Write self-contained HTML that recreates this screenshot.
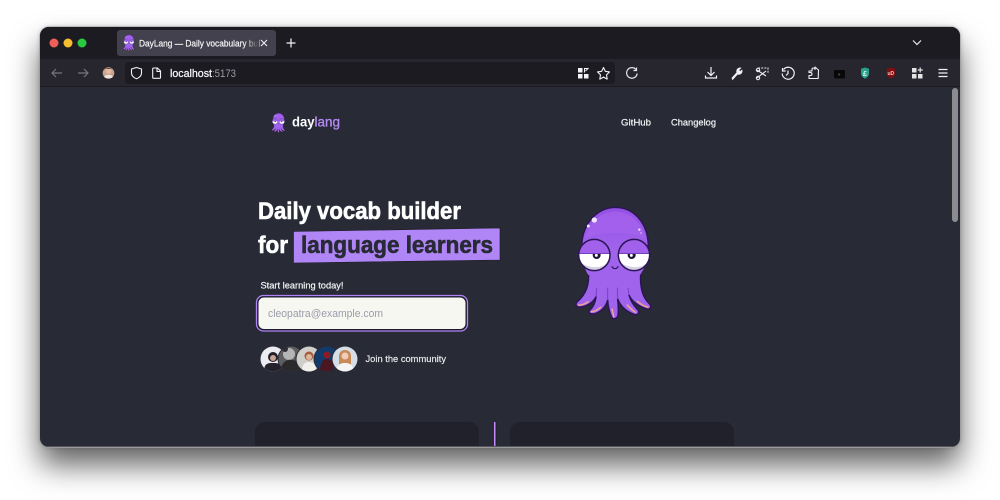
<!DOCTYPE html>
<html><head><meta charset="utf-8"><style>
html,body{margin:0;padding:0;background:#fff;width:1000px;height:500px;overflow:hidden}
#w{position:absolute;left:40px;top:27px;width:920px;height:420px;border-radius:9px;box-shadow:0 18px 30px rgba(0,0,0,.62),0 0 5px rgba(0,0,0,.25);}
svg{position:absolute;left:0;top:0}
text{font-family:"Liberation Sans",sans-serif}
</style></head><body><div id="w"></div>
<svg width="1000" height="500" viewBox="0 0 1000 500" xmlns="http://www.w3.org/2000/svg">
<defs>
<clipPath id="win"><rect x="40" y="27" width="920" height="420" rx="9"/></clipPath>
<linearGradient id="fade" x1="0" x2="1"><stop offset="0" stop-color="#42414d" stop-opacity="0"/><stop offset="1" stop-color="#42414d"/></linearGradient>
<linearGradient id="head" x1="0" x2="0" y1="0" y2="1"><stop offset="0" stop-color="#9350e4"/><stop offset=".6" stop-color="#a063ec"/><stop offset="1" stop-color="#a063ec"/></linearGradient>
<symbol id="octo" viewBox="0 0 330 405">
<path d="M85 225C88 265 82 295 50 322C44 332 52 338 62 336C85 332 100 322 108 305C106 325 98 338 88 347C84 357 96 359 108 355C125 348 138 335 143 315C144 335 148 352 155 366C160 374 172 372 174 360C176 345 175 330 173 312C180 330 195 348 222 358C232 362 240 354 234 345C222 332 212 320 207 300C215 318 235 335 262 342C272 344 276 334 268 326C248 308 238 275 243 225Z" fill="#a063ec" stroke="#2c1556" stroke-width="4.500" stroke-linejoin="round"/>
<path d="M110 280L108 305M143 278L143 315M172 278L173 312M204 278L207 300" fill="none" stroke="#7a3fc4" stroke-width="3"/>
<path d="M56 330C66 331 76 326 84 320M94 350C104 350 114 344 122 337M161 366C160 358 158 350 156 342M226 352C218 346 208 338 202 330M264 337C254 334 240 326 232 319" fill="none" stroke="#f0a58c" stroke-width="4.500" stroke-linecap="round"/>
<path d="M66 175C58 90 110 37 165 37C225 37 272 90 264 175C262 205 250 225 240 240H85C75 225 68 205 66 175Z" fill="url(#head)"/>
<path d="M66 175C58 90 110 37 165 37C225 37 272 90 264 175" fill="none" stroke="#2c1556" stroke-width="4.500"/>
<path d="M78 130C85 80 125 50 165 50C215 50 250 90 254 130C220 110 120 105 78 130Z" fill="#a866ee" opacity=".6"/>
<circle cx="103" cy="75" r="8" fill="#f0e4ff"/><circle cx="85" cy="93" r="4.500" fill="#f0e4ff"/><circle cx="238" cy="104" r="3.500" fill="#f0e4ff"/><circle cx="243" cy="114" r="3" fill="#c9a2f5"/>
<circle cx="103" cy="180" r="47" fill="#fff"/>
<circle cx="222" cy="180" r="47" fill="#fff"/>
<path d="M66 205C85 218 120 222 142 205C128 234 82 234 66 205Z" fill="#d6cfe6"/>
<path d="M186 205C205 218 240 222 260 205C248 234 200 234 186 205Z" fill="#d6cfe6"/>
<circle cx="110" cy="180" r="12" fill="#1f1535"/><circle cx="215" cy="180" r="12" fill="#1f1535"/>
<circle cx="109" cy="181" r="4.500" fill="#fff"/><circle cx="214" cy="181" r="4.500" fill="#fff"/>
<path d="M56 176A47 47 0 0 1 150 176Z" fill="#a161ea"/>
<path d="M175 176A47 47 0 0 1 269 176Z" fill="#a161ea"/>
<path d="M57 176H149M176 176H268" stroke="#5b2ea0" stroke-width="2"/>
<circle cx="103" cy="180" r="47" fill="none" stroke="#2c1556" stroke-width="4.500"/>
<circle cx="222" cy="180" r="47" fill="none" stroke="#2c1556" stroke-width="4.500"/>
<path d="M156 215C160 223 170 223 174 215" fill="none" stroke="#2c1556" stroke-width="3.500" stroke-linecap="round"/>
</symbol>
<clipPath id="a1"><circle cx="273" cy="359" r="12.500"/></clipPath>
<clipPath id="a2"><circle cx="291" cy="359" r="12.500"/></clipPath>
<clipPath id="a3"><circle cx="309" cy="359" r="12.500"/></clipPath>
<clipPath id="a4"><circle cx="327" cy="359" r="12.500"/></clipPath>
<clipPath id="a5"><circle cx="345" cy="359" r="12.500"/></clipPath>
</defs>
<rect x="39.500" y="26.500" width="921" height="421.500" rx="9.500" fill="#9a9a9a"/>
<g clip-path="url(#win)">
<rect x="40" y="27" width="920" height="420" fill="#282a36"/>
<rect x="40" y="27" width="920" height="32" fill="#1c1b22"/>
<rect x="40" y="59" width="920" height="27" fill="#27262e"/>
<rect x="40" y="86" width="920" height="1" fill="#1b1b21"/>
<rect x="117" y="30" width="159" height="26" rx="3" fill="#42414d"/>
<rect x="125" y="62" width="490" height="22" rx="3" fill="#1c1b22"/>
<rect x="255" y="422" width="224" height="40" rx="10" fill="#20212a"/>
<rect x="510" y="422" width="224" height="40" rx="10" fill="#20212a"/>
<rect x="494" y="422" width="1.600" height="30" fill="#c58af9"/>
<rect x="495.600" y="422" width=".8" height="30" fill="#1a1a22"/>
<rect x="40" y="446" width="920" height="1" fill="#55555c"/>
<rect x="952" y="88" width="6" height="134" rx="3" fill="#8c8c90"/>
</g>
<circle cx="54" cy="43" r="4.500" fill="#ed5f57"/><circle cx="68" cy="43" r="4.500" fill="#f5bd2f"/><circle cx="82" cy="43" r="4.500" fill="#28c840"/>
<use href="#octo" x="121" y="33" width="16" height="19.600"/>
<text x="139" y="46.500" font-size="9" stroke="#f4f4f6" stroke-width=".2" fill="#f4f4f6" textLength="121" lengthAdjust="spacingAndGlyphs">DayLang — Daily vocabulary bui</text>
<rect x="244" y="33" width="15" height="20" fill="url(#fade)"/>
<path d="M261 40l6 6M267 40l-6 6" stroke="#f0f0f3" stroke-width="1.100" fill="none"/>
<path d="M291 38.500v9M286.500 43h9" stroke="#f4f4f6" stroke-width="1.200" fill="none"/>
<path d="M913 40.500l4 4 4-4" stroke="#e8e8ea" stroke-width="1.200" fill="none"/>
<path d="M62 73H52M56 69l-4 4 4 4" stroke="#77767f" stroke-width="1.200" fill="none"/>
<path d="M78 73H88M84 69l4 4-4 4" stroke="#77767f" stroke-width="1.200" fill="none"/>
<circle cx="108.500" cy="73" r="5.800" fill="#c9a48e"/><circle cx="108.500" cy="71" r="3" fill="#e3b9a2"/><path d="M103 71a6 5 0 0 1 11 0l-2-2h-7z" fill="#5a4034"/><path d="M104 77a6 4 0 0 0 9 0l-2-2h-5z" fill="#e9e4df"/>
<path d="M136.500 67.500l5 1.500v4c0 3-2.500 4.800-5 5.800c-2.500-1-5-2.800-5-5.800v-4z" fill="none" stroke="#f2f2f4" stroke-width="1.100"/>
<path d="M153 68h4.500l3 3v6.500a.8.800 0 0 1-.8.800h-6.200a.8.800 0 0 1-.8-.8v-9a.8.800 0 0 1 .8-.5zM157 68v3.500h3.500" fill="none" stroke="#f2f2f4" stroke-width="1.100"/>
<text x="170" y="77" font-size="11" stroke="#f5f5f7" stroke-width=".25" fill="#f5f5f7" textLength="42" lengthAdjust="spacingAndGlyphs">localhost</text>
<text x="212" y="77" font-size="11" fill="#9c9ca3" textLength="24" lengthAdjust="spacingAndGlyphs">:5173</text>
<g fill="#f4f4f6"><rect x="578" y="68" width="4.500" height="4.500"/><path d="M584.500 72.500v-4h4" fill="none" stroke="#f4f4f6" stroke-width="1"/><path d="M588.500 68l-3 3" stroke="#f4f4f6" stroke-width="1"/><rect x="578" y="74" width="4.500" height="4.500"/><rect x="584" y="74" width="4.500" height="4.500"/></g>
<path d="M603.500 67.500l1.800 3.800 4.200.6-3 3 .7 4.200-3.700-2-3.700 2 .7-4.200-3-3 4.200-.6z" fill="none" stroke="#f2f2f4" stroke-width="1.100" stroke-linejoin="round"/>
<path d="M636 69.500a5.300 5.300 0 1 0 1.200 4M636.500 67.500v3h-3" fill="none" stroke="#e6e6e9" stroke-width="1.200"/>
<path d="M711 67v8M707.500 72l3.500 3.500 3.500-3.500M705.500 75.500v2.500h11v-2.500" fill="none" stroke="#f2f2f4" stroke-width="1.200"/>
<path d="M732 78l5-5.500c-1-2.500 1-5 3.800-4.500l-2 2 1.200 1.700 2-1.500c.5 2.800-2 4.800-4.400 3.800l-5 5.500z" fill="#f2f2f4" stroke="#f2f2f4" stroke-width=".8"/>
<path d="M758 68h10v6" fill="none" stroke="#e8e8ea" stroke-width="1" stroke-dasharray="2 1.200"/>
<path d="M757 70l9 6M757 78l9-7" fill="none" stroke="#f2f2f4" stroke-width="1.100"/><circle cx="758" cy="70" r="1.700" fill="none" stroke="#f2f2f4"/><circle cx="758" cy="78" r="1.700" fill="none" stroke="#f2f2f4"/>
<path d="M783.500 69.500a6 6 0 1 1-1.300 4M782.500 68v3h3.200M788 70.500v3l-2 2" fill="none" stroke="#f2f2f4" stroke-width="1.200"/>
<path d="M809 71h3v-1.500a1.500 1.500 0 0 1 3 0V67l3.500 3-.3 8.500H809v-3h1.500a1.500 1.500 0 0 0 0-3H809z" fill="none" stroke="#f2f2f4" stroke-width="1.100" stroke-linejoin="round"/>
<rect x="834" y="70" width="11" height="8.500" rx="1.500" fill="#08080a"/><path d="M838.500 73v3l2-1.500z" fill="#555"/><path d="M839 67.500h1.500M842.500 67.500h1" stroke="#2a2a2e" stroke-width="1"/>
<path d="M865 67.500l4 1.300v4.500c0 2.800-2 4.400-4 5.400-2-1-4-2.600-4-5.400v-4.500z" fill="#2aa18c"/><text x="863" y="76" font-size="7" font-weight="bold" fill="#e8fff8">£</text>
<path d="M891 67.500l4.300 1.300v4.500c0 2.800-2.300 4.400-4.300 5.400-2-1-4.300-2.600-4.300-5.400v-4.500z" fill="#7f0f12"/><text x="887.500" y="75" font-size="5" font-weight="bold" fill="#f3c4c4">uD</text>
<g fill="#e4e4e6"><rect x="912" y="68" width="4.500" height="4.500"/><rect x="912" y="74" width="4.500" height="4.500"/><rect x="918" y="74" width="4.500" height="4.500"/><path d="M920.200 67.500v5M917.800 70h5" stroke="#e4e4e6" stroke-width="1.200"/></g>
<path d="M938.500 69.500h9M938.500 73h9M938.500 76.500h9" stroke="#f2f2f4" stroke-width="1.200"/>
<use href="#octo" x="269" y="111" width="19.200" height="23.500"/>
<text x="292" y="126.500" font-size="13.500" font-weight="bold" fill="#fff" textLength="22.500" lengthAdjust="spacingAndGlyphs">day</text>
<text x="314.500" y="126.500" font-size="13.500" fill="#b58bf5" stroke="#b58bf5" stroke-width=".3" textLength="25.500" lengthAdjust="spacingAndGlyphs">lang</text>
<text x="621" y="125.500" font-size="9.500" fill="#f4f4f6" stroke="#f4f4f6" stroke-width=".2" textLength="30" lengthAdjust="spacingAndGlyphs">GitHub</text>
<text x="671" y="125.500" font-size="9.500" fill="#f4f4f6" stroke="#f4f4f6" stroke-width=".2" textLength="45" lengthAdjust="spacingAndGlyphs">Changelog</text>
<text x="258" y="219" font-size="24" font-weight="bold" fill="#fff" stroke="#fff" stroke-width=".6" textLength="203" lengthAdjust="spacingAndGlyphs">Daily vocab builder</text>
<text x="258" y="253" font-size="24" font-weight="bold" fill="#fff" stroke="#fff" stroke-width=".6" textLength="30" lengthAdjust="spacingAndGlyphs">for</text>
<path d="M293.500 231.500L500 228V260L293.500 263Z" fill="#b085f5" stroke="#1c1c26" stroke-width=".6"/>
<text x="301" y="253" font-size="24" font-weight="bold" fill="#282a36" stroke="#282a36" stroke-width=".6" textLength="192" lengthAdjust="spacingAndGlyphs">language learners</text>
<text x="260.500" y="288.500" font-size="9.500" fill="#f4f4f6" stroke="#f4f4f6" stroke-width=".2" textLength="83" lengthAdjust="spacingAndGlyphs">Start learning today!</text>
<rect x="256.500" y="295.500" width="211" height="35.500" rx="7" fill="#1b1b2c" stroke="#b085f5" stroke-width="1.300"/>
<rect x="258.500" y="297.500" width="207" height="31.500" rx="5.500" fill="#f7f7f2"/>
<text x="268" y="317" font-size="11" fill="#9a9cab" textLength="115" lengthAdjust="spacingAndGlyphs">cleopatra@example.com</text>
<circle cx="273" cy="359" r="13.500" fill="#282a36"/>
<g clip-path="url(#a1)"><rect x="260" y="346" width="26" height="26" fill="#ecebf2"/><circle cx="273" cy="357" r="5" fill="#221e2a"/><circle cx="273" cy="358" r="3" fill="#c8a394"/><path d="M264 372c0-9 4-9 9-9s9 0 9 9z" fill="#25222c"/></g>
<circle cx="291" cy="359" r="13.500" fill="#282a36"/>
<g clip-path="url(#a2)"><rect x="278" y="346" width="26" height="26" fill="#5e5e60"/><circle cx="289" cy="354" r="6" fill="#b5b5b5"/><path d="M280 372c2-12 8-13 13-12s9 6 9 12z" fill="#2a2a2c"/><circle cx="285" cy="349" r="3" fill="#2e2e30"/></g>
<circle cx="309" cy="359" r="13.500" fill="#282a36"/>
<g clip-path="url(#a3)"><rect x="296" y="346" width="26" height="26" fill="#cfcec8"/><circle cx="309" cy="356" r="4.500" fill="#a65a3c"/><circle cx="309" cy="357" r="3" fill="#dcb6a0"/><path d="M302 372c0-8 3-10 7-10s7 2 7 10z" fill="#f2f0ec"/></g>
<circle cx="327" cy="359" r="13.500" fill="#282a36"/>
<g clip-path="url(#a4)"><rect x="314" y="346" width="26" height="26" fill="#123a6b"/><circle cx="327" cy="355" r="3.500" fill="#8c1c22"/><path d="M320 372c0-9 3-13 7-13s7 4 7 13z" fill="#4a1620"/></g>
<circle cx="345" cy="359" r="13.500" fill="#282a36"/>
<g clip-path="url(#a5)"><rect x="332" y="346" width="26" height="26" fill="#d5dee6"/><path d="M339 366v-10c0-4 3-6 6-6s6 2 6 6v10z" fill="#c98a58"/><circle cx="345" cy="356" r="3.500" fill="#efcdb8"/><path d="M336 372c1-8 5-9 9-9s8 1 9 9z" fill="#f4f4f4"/></g>
<text x="365.500" y="362" font-size="9" fill="#ececf0" stroke="#ececf0" stroke-width=".15" textLength="80.500" lengthAdjust="spacingAndGlyphs">Join the community</text>
<use href="#octo" x="560" y="195" width="110" height="135"/>
</svg>
</body></html>
